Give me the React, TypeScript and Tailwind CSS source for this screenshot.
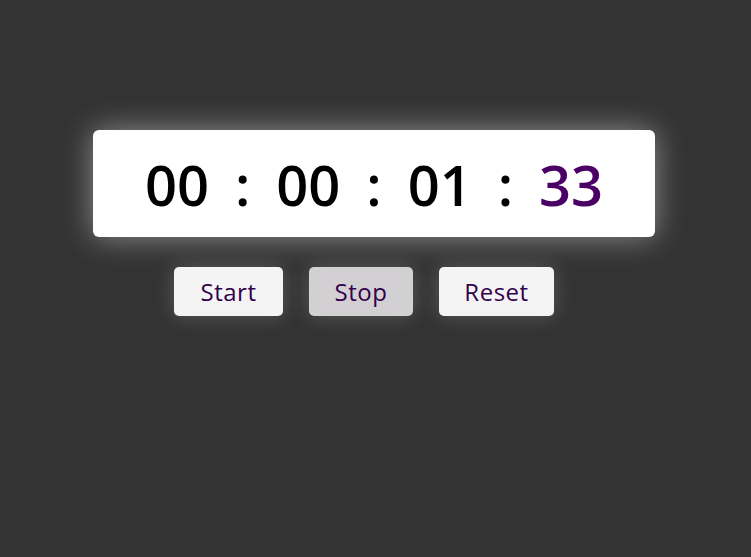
export default function App() {
  const parts = ["00", "00", "01"];

  return (
    <div className="min-h-[557px] w-full bg-[#333333] pt-[130px] pr-[3px]" style={{ fontFamily: '"Open Sans", sans-serif' }}>
      <div className="mx-auto flex h-[107px] w-[562px] items-center justify-center rounded-md bg-white shadow-[0_0_30px_rgba(255,255,255,0.45)]">
        <div className="flex items-center text-[56px] font-semibold leading-none text-black">
          {parts.map((p, i) => (
            <span key={i} className="flex items-center">
              <span>{p}</span>
              <span className="mx-[26px]">:</span>
            </span>
          ))}
          <span className="text-[#4b0066]">33</span>
        </div>
      </div>

      <div className="mt-[30px] flex justify-center gap-[26px] pr-[20px]">
        <button className="h-[49px] w-[109px] rounded-[5px] bg-[#f4f4f5] text-[24px] tracking-[0.5px] text-[#33004a] shadow-[0_0_20px_rgba(255,255,255,0.2)]">
          Start
        </button>
        <button className="h-[49px] w-[104px] rounded-[5px] bg-[#d2d0d2] text-[24px] tracking-[0.5px] text-[#33004a] shadow-[0_0_20px_rgba(255,255,255,0.2)]">
          Stop
        </button>
        <button className="h-[49px] w-[115px] rounded-[5px] bg-[#f4f4f5] text-[24px] tracking-[0.5px] text-[#33004a] shadow-[0_0_20px_rgba(255,255,255,0.2)]">
          Reset
        </button>
      </div>
    </div>
  );
}
